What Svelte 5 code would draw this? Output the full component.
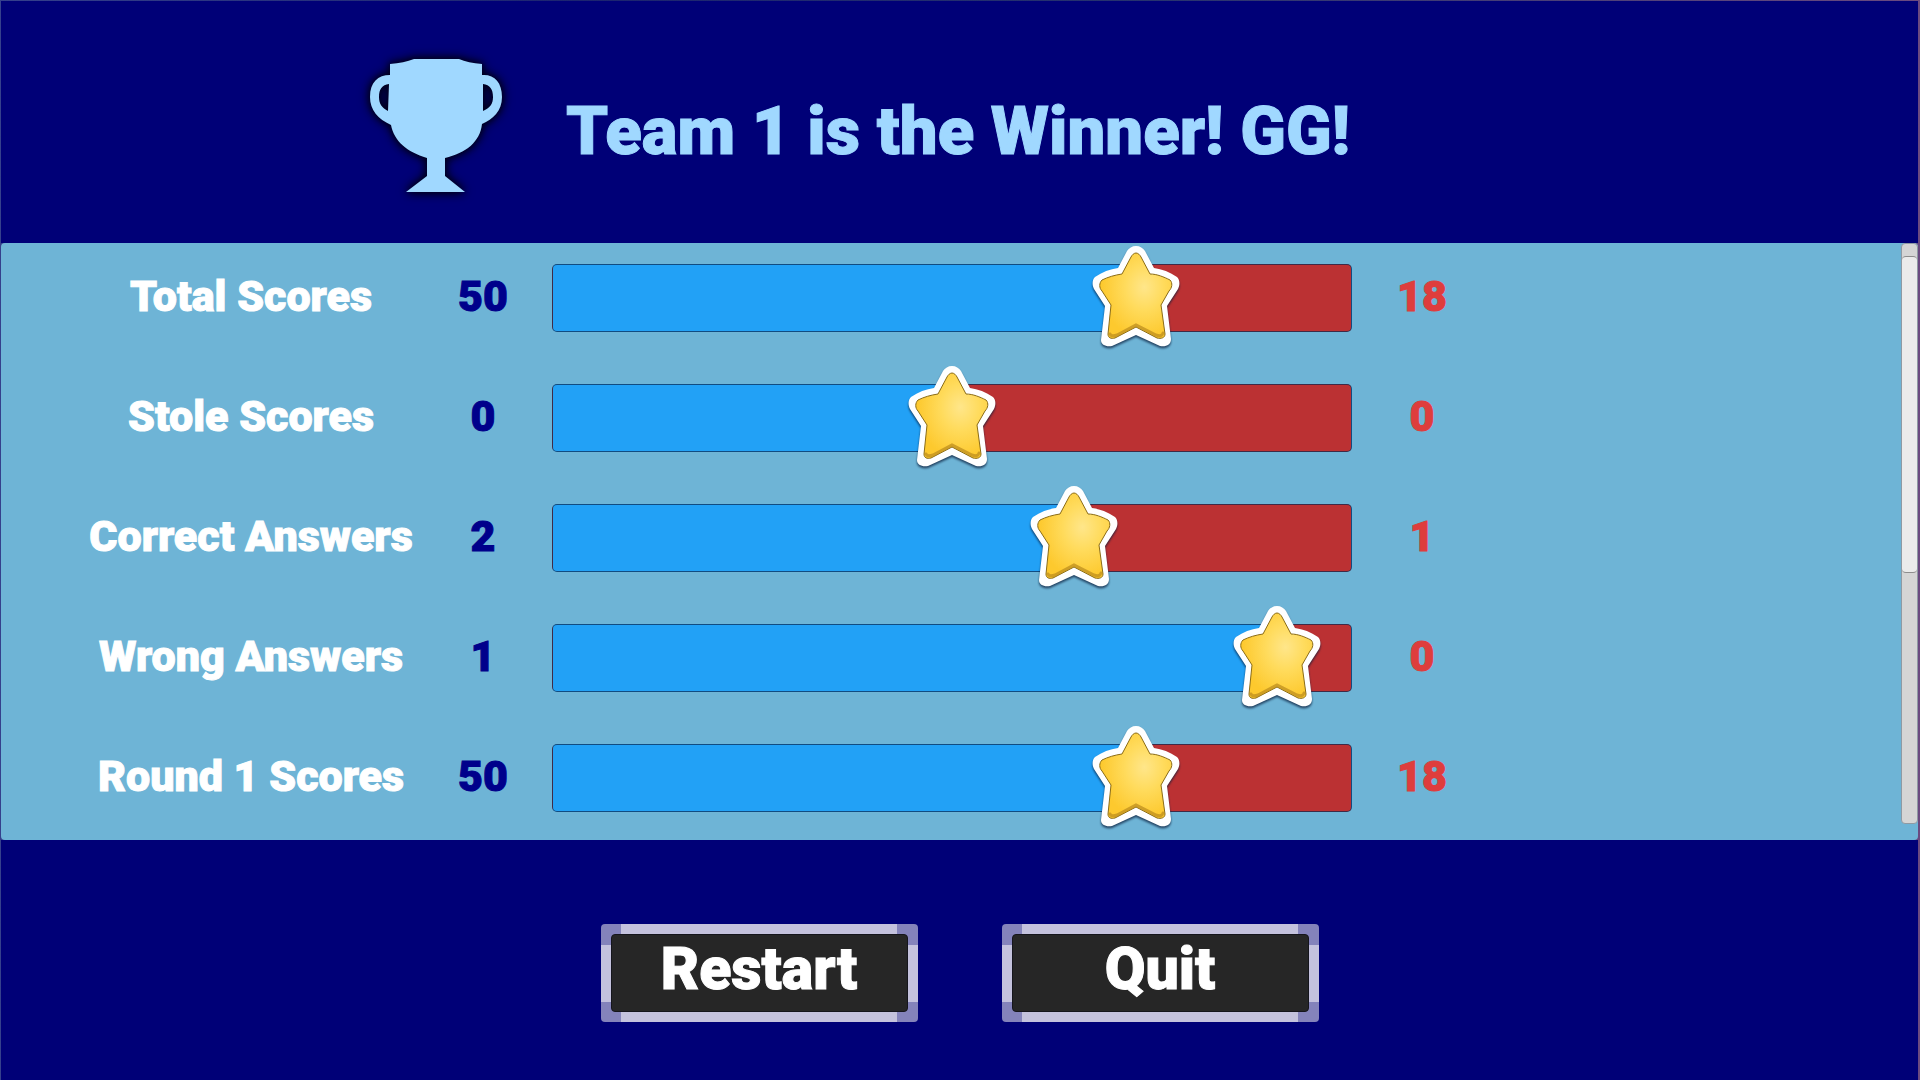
<script lang="ts">
  type Stat = { label: string; team1: number; team2: number; share: number };

  // share is where the star sits on the bar, in percent
  let stats = $state<Stat[]>([
    { label: 'Total Scores', team1: 50, team2: 18, share: 73 },
    { label: 'Stole Scores', team1: 0, team2: 0, share: 50 },
    { label: 'Correct Answers', team1: 2, team2: 1, share: 65.3 },
    { label: 'Wrong Answers', team1: 1, team2: 0, share: 90.6 },
    { label: 'Round 1 Scores', team1: 50, team2: 18, share: 73 },
  ]);

  const starPath =
    'M44 7 C46 7 48 9 49 11 L58 28 C65 28 72 31 78 34 C81 37 80 42 77 45 L69 59 L73 88 C73 92 69 93 65 92 L44 81 L23 92 C19 93 16 92 16 88 L19 59 L10 45 C7 42 7 37 10 34 C16 31 23 29 30 28 L39 11 C40 9 42 7 44 7 Z';
  const rimPath =
    'M44 0 C48 0 51 2 53 5 L62 22 C70 23 78 26 85 31 C88 34 88 39 86 43 L75 60 L79 93 C79 99 74 101 68 100 L44 89 L20 100 C14 101 9 99 9 94 L13 60 L2 43 C0 39 0 34 3 31 C10 26 18 23 26 22 L35 5 C37 2 40 0 44 0 Z';
</script>

<svg class="defs" aria-hidden="true">
  <defs>
    <radialGradient id="gold" cx="0.62" cy="0.4" r="0.6">
      <stop offset="0" stop-color="#ffe68a" />
      <stop offset="0.45" stop-color="#ffdb5c" />
      <stop offset="1" stop-color="#fdc92e" />
    </radialGradient>
  </defs>
</svg>

<div class="screen">
  <header>
    <svg class="trophy" viewBox="0 0 200 190" aria-hidden="true">
      <path
        fill-rule="evenodd"
        d="M50 35 Q64 34 74 30 H119 Q128 34 142 35 V46 C154 45 162 53 162 68 C162 82 153 90 142 95 C140 113 126 124 105 129 V147 L125 163 H66 L87 147 V129 C67 123 54 112 51 96 C38 90 30 81 30 68 C30 53 38 46 50 46 Z M49 55 C42 56 39 60 39 68 C39 75 42 79 48 82 Z M143 55 V82 C150 79 153 75 153 68 C153 60 150 56 143 55 Z"
      />
    </svg>
    <h1>Team 1 is the Winner! GG!</h1>
  </header>

  <main>
    <div class="stats">
      {#each stats as stat, i}
        <div class="row">
          <label for="stat-{i}">{stat.label}</label>
          <span class="team1">{stat.team1}</span>
          <div class="bar">
            <input
              id="stat-{i}"
              type="range"
              min="0"
              max="100"
              step="0.1"
              value={stat.share}
              disabled
              style="--share: {stat.share}%"
            />
            <svg class="star" style="left: {stat.share}%" viewBox="0 0 88 102" aria-hidden="true">
              <path class="rim" d={rimPath} />
              <path class="gold" d={starPath} />
              <path class="shade" d="M18 88 Q19 91 25 89 L44 79 L64 89 Q70 91 71 87" />
            </svg>
          </div>
          <span class="team2">{stat.team2}</span>
        </div>
      {/each}
    </div>
    <div class="scrollbar"><div class="thumb"></div></div>
  </main>

  <footer>
    <button><span>Restart</span></button>
    <button><span>Quit</span></button>
  </footer>
</div>

<style>
  :global(body) {
    background: #000077;
  }

  .defs {
    position: absolute;
    width: 0;
    height: 0;
  }

  .screen {
    display: flex;
    flex-direction: column;
    min-height: 100vh;
    box-sizing: border-box;
    padding: 1px 2px 0 1px;
    background: linear-gradient(90deg, #35408c, #1c2470 30%, #27336e 60%, #6b4a80);
    font-family: Roboto, 'Liberation Sans', sans-serif;
    font-weight: 900;
    -webkit-text-stroke: 1px currentColor;
  }

  header {
    display: flex;
    align-items: center;
    height: 242px;
    padding-left: 339px;
    gap: 26px;
    background: #000077;
  }

  .trophy {
    width: 200px;
    height: 190px;
    padding-top: 4px;
    fill: #a0d8ff;
    filter: drop-shadow(0 0 5px #00001e) drop-shadow(0 0 3px #00001e);
  }

  h1 {
    margin: 0;
    padding-top: 18px;
    font-size: 67px;
    line-height: 72px;
    font-weight: 900;
    color: #a0d8ff;
  }

  main {
    display: flex;
    background: #6eb4d6;
    border-radius: 4px;
  }

  .stats {
    flex: 1;
    display: flex;
    flex-direction: column;
    gap: 52px;
    padding: 21px 429px 28px 87px;
  }

  .row {
    display: grid;
    grid-template-columns: 326px 98px 1fr 100px;
    gap: 20px;
    align-items: center;
    text-align: center;
    font-size: 43px;
    line-height: 60px;
  }

  label,
  .team1,
  .team2 {
    padding-bottom: 4px;
    white-space: nowrap;
  }

  label {
    color: #fff;
  }

  .team1 {
    color: #00008b;
  }

  .team2 {
    color: #de3d3d;
  }

  .bar {
    position: relative;
    height: 68px;
  }

  input {
    display: block;
    appearance: none;
    width: 100%;
    height: 68px;
    margin: 0;
    box-sizing: border-box;
    border: 1px solid rgba(10, 40, 80, 0.7);
    border-radius: 5px;
    background: linear-gradient(90deg, #22a1f6 var(--share), #bb3133 var(--share));
  }

  input::-webkit-slider-thumb {
    appearance: none;
    width: 1px;
    height: 1px;
  }

  .star {
    position: absolute;
    top: -18px;
    width: 88px;
    height: 102px;
    transform: translateX(-50%);
    overflow: visible;
    filter: drop-shadow(0 2px 1px rgba(10, 30, 60, 0.75));
    pointer-events: none;
  }

  .rim {
    fill: #fff;
  }

  .gold {
    fill: url(#gold);
    stroke: #8b6c16;
    stroke-width: 1;
  }

  .shade {
    fill: none;
    stroke: #b98a1c;
    stroke-width: 3;
    stroke-linecap: round;
    opacity: 0.7;
  }

  .scrollbar {
    width: 17px;
    height: 581px;
    box-sizing: border-box;
    padding-top: 12px;
    border: 1px solid #8f9aa3;
    border-radius: 4px;
    background: #d5d5d5;
  }

  .thumb {
    height: 317px;
    box-sizing: border-box;
    border: 1px solid #8d8d8d;
    border-width: 1px 0;
    border-radius: 4px;
    background: #ebebeb;
  }

  footer {
    flex: 1;
    display: flex;
    justify-content: center;
    align-items: flex-start;
    gap: 84px;
    padding: 84px 0 56px;
    background: #000077;
  }

  button {
    width: 317px;
    height: 98px;
    padding: 10px;
    border: 0;
    border-radius: 4px;
    background:
      linear-gradient(#c4c2dd, #c4c2dd) center / 276px 100% no-repeat,
      linear-gradient(#c4c2dd, #c4c2dd) center / 100% 57px no-repeat,
      #8483bb;
    font: inherit;
    font-size: 59px;
    line-height: 68px;
    color: #fff;
    cursor: pointer;
  }

  button span {
    display: block;
    height: 78px;
    box-sizing: border-box;
    border: 1px solid #15151c;
    border-radius: 4px;
    background: #262626;
  }

  button:hover span {
    background: #333;
  }
</style>
